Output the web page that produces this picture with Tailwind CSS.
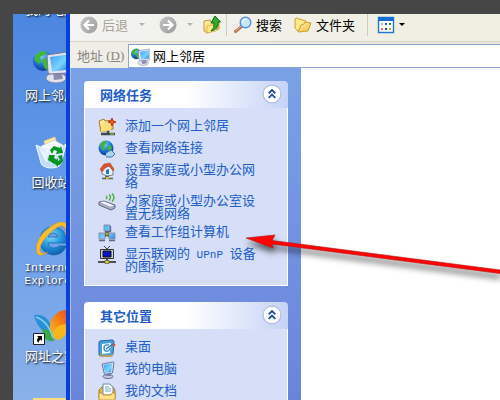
<!DOCTYPE html>
<html lang="zh-CN">
<head>
    <meta charset="UTF-8">
    <meta name="viewport" content="width=device-width, initial-scale=1.0">
    <title>网上邻居</title>
    <script src="https://cdn.jsdelivr.net/npm/@tailwindcss/browser@4"></script>
</head>
<body class="relative flex h-screen overflow-hidden bg-[#464646] pt-[14px] pl-[13px] font-['Noto_Sans_CJK_SC',sans-serif] text-[13px] leading-[13px]">

    <!-- Shared gradients and icons -->
    <svg class="absolute size-0" aria-hidden="true">
        <defs>
            <radialGradient id="globe" cx=".4" cy=".25" r=".8"><stop offset="0" stop-color="#8fd0ff"/><stop offset=".5" stop-color="#2277dd"/><stop offset="1" stop-color="#0a2f80"/></radialGradient>
            <linearGradient id="screen" x1="0" y1="0" x2="1" y2="1"><stop offset="0" stop-color="#3f9df0"/><stop offset=".6" stop-color="#79d4fc"/><stop offset="1" stop-color="#2a7fe0"/></linearGradient>
            <linearGradient id="folder" x1="0" y1="0" x2="1" y2="1"><stop offset="0" stop-color="#fff6b8"/><stop offset="1" stop-color="#eeb93a"/></linearGradient>
            <radialGradient id="ie" cx=".4" cy=".3" r=".8"><stop offset="0" stop-color="#7fe0ff"/><stop offset=".5" stop-color="#2496dc"/><stop offset="1" stop-color="#0b4fa0"/></radialGradient>
            <linearGradient id="orange" x1="0" y1="1" x2="1" y2="0"><stop offset="0" stop-color="#fcb514"/><stop offset="1" stop-color="#ea4c1c"/></linearGradient>
            <linearGradient id="gray" x1="0" y1="0" x2="1" y2="1"><stop offset="0" stop-color="#c4c4c4"/><stop offset="1" stop-color="#9d9d9d"/></linearGradient>
        </defs>
        <symbol id="network" viewBox="0 0 36 36">
            <ellipse cx="23" cy="30" rx="10" ry="5" fill="#e3e3ee" stroke="#8587a5"/>
            <path d="M20 24l8-1 2 8-9 1z" fill="#8c8cb0"/>
            <circle cx="10" cy="13" r="10" fill="url(#globe)"/>
            <path d="M2 9c2-5 8-7 12-5l-3 3-4 2 1 4-2 3-4-3zM10 11l6-1 2 6-5 6-3-5z" fill="#3fba2c"/>
            <path d="M14 7l20-3q2 0 2 2v17q0 2-2 2l-17 1q-2 0-2-2z" fill="#e4e4ee" stroke="#777a9e"/>
            <path d="M17 9l17-2.500v15.500l-15 1.500z" fill="url(#screen)"/>
        </symbol>
        <symbol id="pc" viewBox="0 0 18 18">
            <ellipse cx="10" cy="15.500" rx="5" ry="2" fill="#c9cce0" stroke="#676c90"/>
            <path d="M8 11h5v4H8z" fill="#7d82aa"/>
            <path d="M4 3l11-2q1 0 1 1L14.500 12l-8 1.500z" fill="#d7ddf0" stroke="#6779a0"/>
            <path d="M5.500 4l8.500-1.500-1 8.500-6 1z" fill="url(#screen)"/>
        </symbol>
        <symbol id="chevrons" viewBox="0 0 18 18">
            <circle cx="9" cy="9" r="8" fill="#fff" stroke="#b2bbdc"/>
            <path d="M6 8.500L9 5.500l3 3M6 12.500L9 9.500l3 3" fill="none" stroke="#1c4b9e" stroke-width="1.600"/>
        </symbol>
    </svg>

    <!-- Desktop -->
    <aside class="w-[53px] shrink-0 overflow-hidden bg-linear-to-b from-[#4b86e0] via-[#699deb] to-[#8ab1e8] text-white [text-shadow:1px_1px_2px_#000]">
        <ul class="w-[76px] text-center">
            <li class="-mt-[12px] h-[46px]">我的电脑</li>
            <li class="flex h-[87px] flex-col items-center gap-1">
                <svg class="size-9"><use href="#network"/></svg>
                网上邻居
            </li>
            <li class="flex h-[87px] flex-col items-center gap-1">
                <svg class="size-9" viewBox="0 0 36 36">
                    <path d="M11 6l11-4 3 10-12 3z" fill="#ffe9a0" stroke="#dfc377" stroke-width=".6"/>
                    <path d="M15 8l6-3 9 5-2 12-16 1-4-12z" fill="#f8faff" stroke="#bdc9da" stroke-width=".7"/>
                    <path d="M3 10l5 18q1 4 9 5 9 0 11-4l5-20q-5 5-14 5-10 0-16-4z" fill="#d8efff" fill-opacity=".8" stroke="#eef8ff"/>
                    <path d="M7 13l7 14M14 15l5 14" stroke="#fff" stroke-width="2" opacity=".7"/>
                    <path d="M17 15l4-4 6 2 1-2 2 7-7 1 1-3-3-1-2 4zM16 20l6 0-1 3 3 2-3 4-6-4zM25 21l4-1 1 6-3 4h-2v2l-4-4 4-5v3l2-1z" fill="#0a9423"/>
                </svg>
                回收站
            </li>
            <li class="flex h-[87px] flex-col items-center gap-1">
                <svg class="size-9" viewBox="0 0 36 36">
                    <path d="M34 21H15q1 5 6 5 3 0 5-2h7q-3 9-13 9Q7 31 7 18 8 5 20 5q14 1 14 16zM15 15h10q-1-4-5-4t-5 4z" fill="url(#ie)" fill-rule="evenodd" stroke="#1261ac" stroke-width=".7"/>
                    <path d="M10 11Q1 22 4 31q2 5 11-1-7 3-8-1-1-7 9-17Q27 1 31 5q3 2 1 8 5-9 1-12-7-5-23 10z" fill="#f9bd2f" stroke="#cf8b18" stroke-width=".5"/>
                </svg>
                <span class="font-['Liberation_Mono',monospace] text-[11px] leading-[13px]">Internet<br>Explorer</span>
            </li>
            <li class="flex h-[87px] flex-col items-center gap-1">
                <svg class="size-9" viewBox="0 0 36 36">
                    <path d="M1 6q9-1 14 5 4 5 4 11-7 2-11-2-5-5-7-14z" fill="#2b8fd8"/>
                    <path d="M9 20q6 1 10 2l2 10q-6 1-9-3-3-4-3-9z" fill="#36ab4c"/>
                    <path d="M18 23q-3-9 3-16 6-7 14-6 1 8-2 14z" fill="url(#orange)"/>
                    <path d="M19 24q5-9 16-9 0 11-7 15-4 2-7-1z" fill="#f8b51c"/>
                    <path d="M3 8q12 4 17 21" fill="none" stroke="#86d0ef" stroke-width="1.500"/>
                    <path d="M.5 24.500h11v11H.5z" fill="#fff" stroke="#222"/>
                    <path d="M4 27h5v5l-1.500-1.500q-2 1-2 3.500-3-3 0-5.500z" fill="#000"/>
                </svg>
                网址之家
            </li>
            <li class="flex flex-col items-center">
                <svg class="size-9" viewBox="0 0 36 36"><path d="M0 2h36v30H0z" fill="#fbdc80"/></svg>
            </li>
        </ul>
    </aside>

    <!-- Explorer window -->
    <main class="flex min-w-0 flex-1 flex-col border-l-4 border-[#0a3fdc] bg-white">
        <div class="flex h-7 shrink-0 items-center border-b border-[#d8d4c2] bg-linear-to-r from-[#f3f3f1] to-[#efeee0] pb-[5px] pl-[10px]">
            <button class="flex items-center gap-1 text-[#a5a294]" disabled>
                <svg class="size-[18px]" viewBox="0 0 18 18"><circle cx="9" cy="9" r="8.500" fill="url(#gray)"/><path d="M14 9H5M9 4.500L4.500 9 9 13.500" fill="none" stroke="#fff" stroke-width="2.200"/></svg>
                <span class="pb-[2px]">后退</span>
            </button>
            <button class="ml-[11px]" disabled aria-label="后退历史"><svg class="h-3 w-[7px]" viewBox="0 0 7 12"><path d="M0 4h6L3 7z" fill="#b9b5a5"/></svg></button>
            <button class="ml-[13px]" disabled aria-label="前进"><svg class="size-[18px]" viewBox="0 0 18 18"><circle cx="9" cy="9" r="8.500" fill="url(#gray)"/><path d="M4 9h9M9 4.500l4.500 4.500L9 13.500" fill="none" stroke="#fff" stroke-width="2.200"/></svg></button>
            <button class="ml-[10px]" disabled aria-label="前进历史"><svg class="h-3 w-[7px]" viewBox="0 0 7 12"><path d="M0 4h6L3 7z" fill="#b9b5a5"/></svg></button>
            <button class="ml-[9px]" aria-label="向上">
                <svg class="size-[18px]" viewBox="0 0 18 18"><path d="M1 5l6-1 1 2 8-1v8l-12 4-3-2z" fill="url(#folder)" stroke="#c79a2b"/><path d="M4 10l11-2-2 7-9 2z" fill="#ffe884" stroke="#d0a030" stroke-width=".6"/><path d="M8 15q4-3 3-8H8l4-7 5.500 6H15q1 7-7 9z" fill="#2fae2f" stroke="#0c6a14"/></svg>
            </button>
            <span class="ml-[5px] h-full border-l border-[#cfcbb9]"></span>
            <button class="ml-[7px] flex items-center gap-1">
                <svg class="size-[18px]" viewBox="0 0 18 18"><path d="M1.500 15.500l6-5" stroke="#b7744c" stroke-width="3" stroke-linecap="round"/><path d="M1.500 15l5.500-5" stroke="#eec2a0"/><circle cx="11.500" cy="6.500" r="5.300" fill="#c4e7fd" stroke="#548fdf" stroke-width="1.400"/><path d="M8.500 6q1-3 4-3" fill="none" stroke="#fff" stroke-width="1.500"/></svg>
                <span class="pb-[2px]">搜索</span>
            </button>
            <button class="ml-3 flex items-center gap-1">
                <svg class="size-[18px]" viewBox="0 0 18 18"><path d="M1 3q2-2 4 0l7 2v8l-8 2-3-3z" fill="#ffe98e" stroke="#cf9d2b"/><path d="M4 16l3-7 3-1 1-2 6 1-3 8z" fill="url(#folder)" stroke="#cf9d2b"/></svg>
                <span class="pb-[2px]">文件夹</span>
            </button>
            <span class="ml-3 h-full border-l border-[#cfcbb9]"></span>
            <button class="ml-[9px] flex items-center gap-1" aria-label="查看">
                <svg class="size-[18px]" viewBox="0 0 18 18"><path d="M1.500 1.500h15v15h-15z" fill="#fff" stroke="#2476d2" stroke-width="1.400"/><path d="M1 1h16v4H1z" fill="#176dd4"/><path d="M4 7h2v2H4z" fill="#aab0d6"/><path d="M8 7h2v2H8z" fill="#3557b8"/><path d="M12 7h2v2h-2z" fill="#219a32"/><path d="M4 12h2v2H4z" fill="#ee6543"/><path d="M8 12h2v2H8z" fill="#164ba8"/><path d="M12 12h2v2h-2z" fill="#d5a414"/></svg>
                <svg class="h-3 w-[7px]" viewBox="0 0 7 12"><path d="M0 4h6L3 7z" fill="#000"/></svg>
            </button>
        </div>
        <form class="flex h-[26px] shrink-0 items-stretch bg-linear-to-r from-[#efeee8] to-[#ebe9dc] pt-[2px] pl-[7px]">
            <label for="address" class="flex w-[51px] items-center whitespace-pre pb-[2px] text-[#86847a]">地址<span class="font-['Liberation_Serif',serif]"> (<u>D</u>)</span></label>
            <div class="flex min-w-0 flex-1 items-center gap-[3px] border-y border-l border-[#86a5cf] bg-white pl-[2px]">
                <svg class="size-[19px] shrink-0"><use href="#network"/></svg>
                <input id="address" type="text" value="网上邻居" class="min-w-0 flex-1 bg-transparent leading-4 text-black outline-none">
            </div>
        </form>

        <div class="flex min-h-0 flex-1">
            <nav class="flex w-[231px] shrink-0 flex-col gap-4 overflow-hidden border-l border-[#a9c4f0] bg-linear-to-b from-[#7aa1e6] to-[#6b84db] px-[13px] pt-[13px] text-[#215dc6]">
                <section class="shrink-0">
                    <div class="flex h-[27px] items-center justify-between rounded-t bg-linear-to-r from-white from-50% to-[#c6d3f7] pr-[6px] pl-4">
                        <h2 class="pb-px font-bold">网络任务</h2>
                        <button class="pb-[2px]" aria-label="折叠网络任务"><svg class="size-5"><use href="#chevrons"/></svg></button>
                    </div>
                    <ul class="flex flex-col gap-1 border-x border-b border-white bg-[#d6dff7] px-[13px] pt-[10px] pb-3">
                        <li><a href="#" class="flex gap-[9px]">
                            <svg class="size-[18px] shrink-0" viewBox="0 0 18 18"><path d="M3 16h14M10 12v4" stroke="#3f4b48" stroke-width="2.500"/><path d="M12 16h4" stroke="#72ba50" stroke-width="1.500"/><path d="M1 3l5-2 1 2 8-1v9L3 14z" fill="url(#folder)" stroke="#a87b20"/><path d="M3 7l11-2-1 7-10 2z" fill="#ffe277"/><path d="M14 0l1 3 3 1-3 1-1 3-1-3-3-1 3-1z" fill="#f36b18" stroke="#c92f16"/></svg>
                            <span class="pb-px">添加一个网上邻居</span></a></li>
                        <li><a href="#" class="flex gap-[9px]">
                            <svg class="size-[18px] shrink-0" viewBox="0 0 18 18"><circle cx="8" cy="8" r="7.500" fill="url(#globe)"/><path d="M2 5q3-5 7-4L8 4 6 6l1 3-2 2zM9 6l4-1 1 4-4 2z" fill="#3cb548"/><path d="M8 13l5-3 4 4-3 3-6 0" fill="#a9d3ee" stroke="#4078a8"/></svg>
                            <span class="pb-px">查看网络连接</span></a></li>
                        <li><a href="#" class="flex gap-[9px]">
                            <svg class="size-[18px] shrink-0" viewBox="0 0 18 18"><path d="M8 12h2v4H8zM4 16.500h11" stroke="#575f68" stroke-width="1.500"/><path d="M8 16h3" stroke="#f0b61d" stroke-width="2"/><path d="M4 7l7-3 4 4v5l-6 1-5-2z" fill="#e4f2ff" stroke="#70839a"/><path d="M2 7l4-5 6-1 4 6-1 2-4-5-3 1-4 5z" fill="#dc532b" stroke="#b6401f" stroke-width=".5"/><path d="M8 8l3-1v5H8z" fill="#3477ae"/></svg>
                            <span class="pb-px">设置家庭或小型办公网<br>络</span></a></li>
                        <li><a href="#" class="flex gap-[9px]">
                            <svg class="size-[18px] shrink-0" viewBox="0 0 18 18"><path d="M1 9l5-1 11 4v3l-4 2L1 12z" fill="#a8adc8" stroke="#62678a"/><path d="M2 9l4-.5 10 4-4 1z" fill="#f4f5fb"/><path d="M8 3q2 1 0 3M11 1.500q3 2 0 6M14 .5q4 4 0 8" fill="none" stroke="#43aa29" stroke-width="1.300"/></svg>
                            <span class="pb-px">为家庭或小型办公室设<br>置无线网络</span></a></li>
                        <li><a href="#" class="flex gap-[9px]">
                            <svg class="size-[18px] shrink-0" viewBox="0 0 18 18"><path d="M9 7v4L4 14M9 11l5 3" fill="none" stroke="#4b5764" stroke-width="2"/><path d="M6 1h6v6H6zM1 9h6v6H1zM11 9h6v6h-6z" fill="url(#screen)" stroke="#8494aa"/><path d="M7.500 8.500h3v3h-3z" fill="#d9a91e" stroke="#5c5232" stroke-width=".7"/><path d="M1 16.500h6M11 16.500h6M12.500 2v5.500H7" fill="none" stroke="#5f687e" stroke-width="1.300"/></svg>
                            <span class="pb-px">查看工作组计算机</span></a></li>
                        <li><a href="#" class="flex gap-[9px]">
                            <svg class="size-[18px] shrink-0" viewBox="0 0 18 18"><path d="M6 0l3 3 3-3" fill="none" stroke="#444"/><path d="M2.500 3.500h13v9h-13z" fill="#d3d3d3" stroke="#333"/><path d="M5 5h8v6H5z" fill="#0915c4" stroke="#111"/><path d="M9 12v4M0 16h18" stroke="#222" stroke-width="1.500"/><path d="M7 14.500h4v3H7z" fill="#ddd21e" stroke="#444" stroke-width=".6"/></svg>
                            <span class="pb-px">显示联网的<span class="font-['Liberation_Mono',monospace] text-[11px] leading-[0]"> UPnP </span>设备<br>的图标</span></a></li>
                    </ul>
                </section>

                <section class="shrink-0">
                    <div class="flex h-[27px] items-center justify-between rounded-t bg-linear-to-r from-white from-50% to-[#c6d3f7] pr-[6px] pl-4">
                        <h2 class="pb-px font-bold">其它位置</h2>
                        <button class="pb-[2px]" aria-label="折叠其它位置"><svg class="size-5"><use href="#chevrons"/></svg></button>
                    </div>
                    <ul class="flex flex-col gap-1 border-x border-b border-white bg-[#d6dff7] px-[13px] pt-[10px] pb-3">
                        <li><a href="#" class="flex gap-[9px]">
                            <svg class="size-[18px] shrink-0" viewBox="0 0 18 18"><path d="M2 2l12-1q2 0 2 2l-1 12q0 2-2 2H3q-2 0-2-2V4q0-2 1-2z" fill="#4a9edf" stroke="#1d65aa"/><path d="M2 15l2 2h9l2-2" fill="none" stroke="#d5a53b" stroke-width="1.300"/><path d="M4 5l9-1-1 10-8 1z" fill="#f3faff"/><path d="M11 6q-5-1-5 3 0 4 4 3 2-1 2-3" fill="none" stroke="#2b83c8" stroke-width="1.300"/><path d="M8 10l7-5" stroke="#3a75a8" stroke-width="1.500"/><path d="M15 4l3 2-3 2z" fill="#df4b22"/></svg>
                            <span class="pb-px">桌面</span></a></li>
                        <li><a href="#" class="flex gap-[9px]">
                            <svg class="size-[18px] shrink-0"><use href="#pc"/></svg>
                            <span class="pb-px">我的电脑</span></a></li>
                        <li><a href="#" class="flex gap-[9px]">
                            <svg class="size-[18px] shrink-0" viewBox="0 0 18 18"><path d="M1 7l3-3h11l2 3v9H1z" fill="#e9b53c" stroke="#a97c20"/><path d="M5 1h7l3 3v8H5z" fill="#fff" stroke="#678ab2"/><path d="M7 4h4M7 6h6M7 8h6" stroke="#6aa5dd"/><path d="M1 10h3l1 2h8l1-2h3v6q0 1-1 1H2q-1 0-1-1z" fill="#ffe38a" stroke="#b98a26" stroke-width=".8"/></svg>
                            <span class="pb-px">我的文档</span></a></li>
                    </ul>
                </section>
            </nav>
            <div class="flex-1 bg-white"></div>
        </div>
    </main>

    <!-- Pointer arrow -->
    <svg class="pointer-events-none absolute top-[225px] left-[240px] h-[60px] w-[260px] drop-shadow-[1px_5px_3px_rgb(0_0_0/0.6)]" viewBox="0 0 260 60">
        <path d="M6 13l29-3-3 5.500L260 45v3.500L32 19l1 4z" fill="#fb0505" stroke="#b81212" stroke-width=".6"/>
    </svg>
</body>
</html>
